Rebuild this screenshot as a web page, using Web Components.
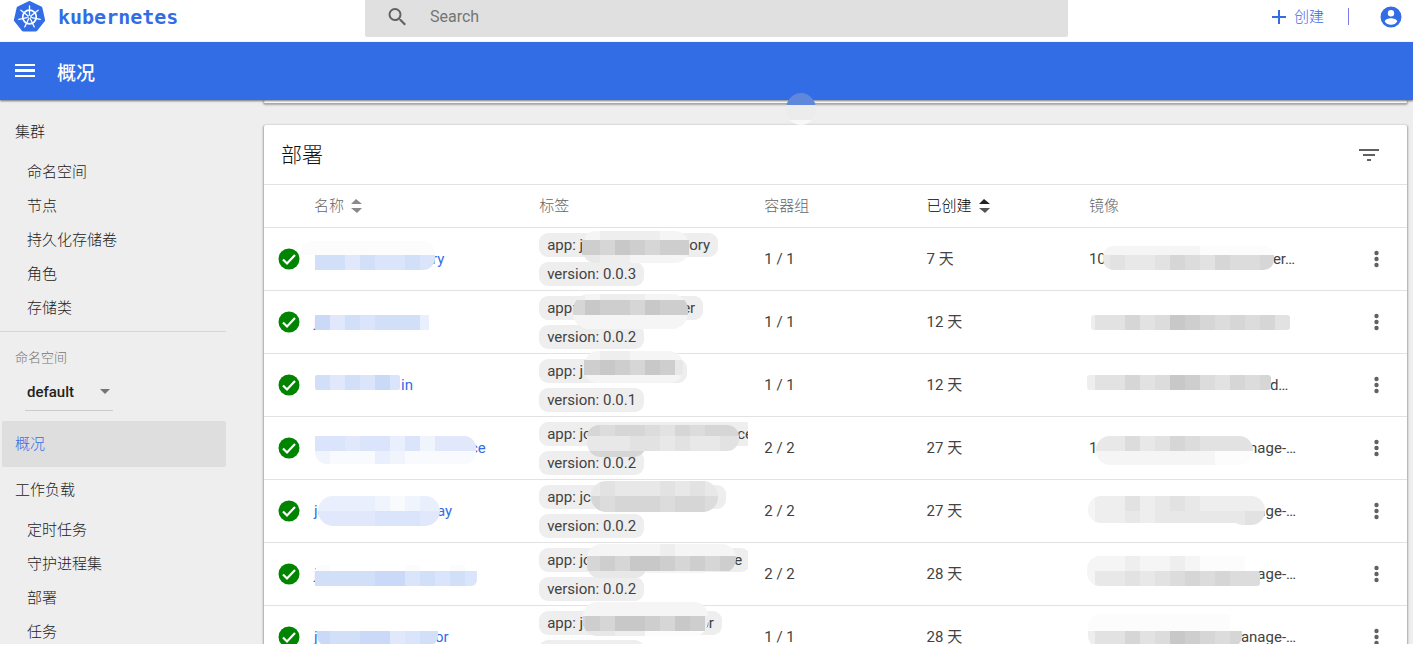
<!DOCTYPE html>
<html lang="zh-CN">
<head>
<meta charset="utf-8">
<title>Kubernetes Dashboard</title>
<style>
  html, body { margin: 0; height: 100%; background: #fff; overflow: hidden; }
  body { font: 15px/20px Roboto, "Noto Sans CJK SC", sans-serif; color: #333; }
</style>
</head>
<body>
<kd-app>
  <kd-topbar slot="top"></kd-topbar>
  <kd-actionbar slot="bar">概况</kd-actionbar>
  <kd-nav slot="nav"></kd-nav>
  <kd-card class="previous"></kd-card>
  <kd-card heading="部署"><kd-deployments></kd-deployments></kd-card>
</kd-app>

<script>
const define = (name, html, setup) => {
  const template = document.createElement('template');
  template.innerHTML = html;
  customElements.define(name, class extends HTMLElement {
    constructor() {
      super();
      this.attachShadow({ mode: 'open' }).append(template.content.cloneNode(true));
    }
    connectedCallback() { if (setup) setup(this, this.shadowRoot); }
  });
};

define('kd-app', `
<style>
  :host { display: flex; flex-direction: column; height: calc(100vh - 9px); overflow: hidden; background: #eee; }
  .body { flex: 1; min-height: 0; display: flex; }
  main { flex: 1; min-width: 0; padding: 0 6px 0 38px; overflow: hidden; display: flex; flex-direction: column; gap: 22px; }
  ::slotted(kd-card) { flex: none; }
  ::slotted(.previous) { height: 3px; }
  .blot { position: absolute; left: calc(50% + 79px); top: 93px; z-index: 3; }
</style>
<slot name="top"></slot>
<slot name="bar"></slot>
<div class="body"><slot name="nav"></slot><main><slot></slot></main></div>
<svg class="blot" width="30" height="32" aria-hidden="true">
  <clipPath id="c"><ellipse cx="15" cy="16" rx="15" ry="16"/></clipPath>
  <g clip-path="url(#c)"><path fill="#5f88dc" d="M0 0h30v12H0z"/><path fill="#ececec" d="M0 12h30v15H0z"/><path fill="#f8f8f8" d="M0 27h30v5H0z"/></g>
</svg>`);

define('kd-topbar', `
<style>
  :host { display: flex; height: 42px; background: #fff; flex: none; align-items: flex-start; }
  .brand { flex: 0 0 365px; box-sizing: border-box; display: flex; padding: 0 0 0 13px; gap: 12px; height: 34px; align-items: center;
    color: #326de6; font: bold 20px/24px "DejaVu Sans Mono", monospace; text-decoration: none; }
  .search { flex: 1; height: 37px; box-sizing: border-box; display: flex; align-items: center; gap: 20px; padding: 0 20px 4px;
    background: #e0e0e0; border-radius: 0 0 2px 2px; }
  input { flex: 1; min-width: 0; border: 0; outline: 0; background: none; padding: 0; font: 16px/20px Roboto, sans-serif; color: #333; }
  input::placeholder { color: #757575; opacity: 1; }
  .actions { flex: 0 0 345px; box-sizing: border-box; display: flex; justify-content: flex-end; align-items: center; height: 33px; padding-right: 10px; }
  button { border: 0; background: none; padding: 0; color: #326de6; font: 300 15px/20px Roboto, "Noto Sans CJK SC", sans-serif; display: flex; align-items: center; gap: 7px; }
  i { width: 1px; height: 17px; background: #7c7be8; margin: 0 30px 0 24px; }
</style>
<a class="brand" href="#"><svg width="33" height="34" viewBox="-16.500 -17 33 34" aria-hidden="true">
  <path d="M0-14 10.900-8.700 13.600 3.100 6.100 12.600H-6.100L-13.600 3.100-10.900-8.700Z" fill="#326de6" stroke="#326de6" stroke-width="4" stroke-linejoin="round"/>
  <g id="w" stroke="#fff" fill="none" stroke-linecap="round"><circle r="6.800" stroke-width="1.700"/><circle r="1.700" stroke-width="1"/></g>
</svg><span>kubernetes</span></a>
<label class="search"><svg width="25" height="24" viewBox="0 0 24 24" fill="#616161" aria-hidden="true"><path d="M15.500 14h-.79l-.28-.27A6.470 6.470 0 0 0 16 9.500 6.500 6.500 0 1 0 9.500 16c1.610 0 3.090-.59 4.230-1.570l.27.28v.79l5 4.990L20.490 19l-4.990-5zm-6 0a4.500 4.500 0 1 1 0-9 4.500 4.500 0 0 1 0 9z"/></svg>
  <input type="text" placeholder="Search" aria-label="Search"></label>
<div class="actions">
  <button><svg width="16" height="16" stroke="#326de6" stroke-width="2" aria-hidden="true"><path d="M8 1v14M1 8h14"/></svg>创建</button>
  <i></i>
  <button aria-label="User"><svg width="24" height="24" viewBox="0 0 24 24" fill="#326de6" aria-hidden="true"><path d="M12 1.500a10.500 10.500 0 1 0 0 21 10.500 10.500 0 0 0 0-21zM12 5a3.200 3.200 0 1 1 0 6.400A3.200 3.200 0 0 1 12 5zm0 14.700a7.300 7.300 0 0 1-6.200-3.300c0-2.100 4.100-3.200 6.200-3.200s6.200 1.100 6.200 3.200a7.300 7.300 0 0 1-6.200 3.300z"/></svg></button>
</div>`, (el, root) => {
  root.getElementById('w').innerHTML += [0, 1, 2, 3, 4, 5, 6].map(k =>
    `<path stroke-width="1.300" transform="rotate(${k * 360 / 7})" d="M0-2.500V-11"/>`).join('');
});

define('kd-actionbar', `
<style>
  :host { display: flex; flex: none; align-items: center; height: 58px; padding-left: 12px; gap: 20px; background: #326de6; color: #fff;
    position: relative; z-index: 2; box-shadow: 0 1px 2px rgba(0,0,0,.55); }
  button { border: 0; padding: 0; background: none; display: flex; }
  h1 { margin: 6px 0 0; font: 500 19px/24px Roboto, "Noto Sans CJK SC", sans-serif; }
</style>
<button aria-label="Menu"><svg width="25" height="24" fill="#fff" aria-hidden="true"><path d="M3 5h20v2H3zM3 10h20v3H3zM3 16h20v2H3z"/></svg></button>
<h1><slot></slot></h1>`);

define('kd-nav', `
<style>
  :host { display: block; flex: 0 0 226px; padding-top: 9px; font-weight: 300; overflow: hidden; }
  a { display: block; color: #222; text-decoration: none; line-height: 34px; padding-left: 27px; }
  a.group { line-height: 46px; padding-left: 15px; }
  a.current { margin-left: 2px; padding-left: 13px; background: #dedede; border-radius: 2px; color: #326de6; }
  hr { border: 0; border-top: 1px solid #d6d6d6; margin: 6px 0 16px; }
  label { display: block; padding-left: 15px; font-size: 13px; line-height: 20px; color: #757575; }
  .picker { position: relative; width: 88px; margin: 6px 0 10px 25px; border-bottom: 1px solid #ccc; }
  select { display: block; appearance: none; border: 0; outline: 0; background: none; width: 100%; height: 36px; padding: 0 0 0 2px; font: 500 15px/20px Roboto, sans-serif; color: #222; }
  .picker svg { position: absolute; right: 3px; top: 15px; pointer-events: none; }
</style>
<nav>
  <a class="group" href="#">集群</a>
  <a href="#">命名空间</a><a href="#">节点</a><a href="#">持久化存储卷</a><a href="#">角色</a><a href="#">存储类</a>
  <hr>
  <label for="ns">命名空间</label>
  <div class="picker"><select id="ns"><option>default</option></select><svg width="10" height="5" fill="#757575"><path d="M0 0h10L5 5z"/></svg></div>
  <a class="group current" href="#">概况</a>
  <a class="group" href="#">工作负载</a>
  <a href="#">定时任务</a><a href="#">守护进程集</a><a href="#">部署</a><a href="#">任务</a>
</nav>`);

define('kd-card', `
<style>
  :host { display: block; background: #fff; border-radius: 2px; box-shadow: 0 1px 2px 1px rgba(0,0,0,.3); }
  header { display: flex; justify-content: space-between; align-items: center; height: 59px; padding: 0 28px 0 17px; }
  header[hidden] { display: none; }
  h2 { margin: 0; font: 300 21px/28px Roboto, "Noto Sans CJK SC", sans-serif; color: #111; }
  button { border: 0; background: none; padding: 0; display: flex; }
</style>
<header><h2></h2><button aria-label="Filter"><svg width="20" height="14" fill="#616161"><path d="M0 1h20v2H0zM4 6h12v2H4zM8 11h4v2H8z"/></svg></button></header>
<slot></slot>`, (el, root) => {
  const heading = el.getAttribute('heading');
  root.querySelector('header').hidden = !heading;
  root.querySelector('h2').textContent = heading || '';
});

define('kd-chip', `
<style>
  :host { display: block; width: max-content; height: 24px; line-height: 24px; padding: 0 8px; border-radius: 9px; background: #eee; white-space: nowrap; font-size: 15px; }
</style><slot></slot>`);

/* Pixelated cover over private names: rounded outlines clip bands of 15px tiles. */
const TONES = { 1: '#cbd9f8', 2: '#d2dff9', 3: '#dae4fa', 4: '#e1e8fb', 5: '#e9effc', 6: '#f0f4fd', 7: '#f8fafe',
  A: '#c8c8c8', B: '#cecece', C: '#d6d6d6', D: '#dcdcdc', E: '#e2e2e2', F: '#e8e8e8', G: '#eee', H: '#f5f5f5', I: '#fcfcfc' };
define('kd-mosaic', `
<style>
  :host { position: absolute; left: 0; top: 0; pointer-events: none; }
  svg { display: block; overflow: visible; }
</style><svg width="1" height="1" aria-hidden="true"></svg>`, (el, root) => {
  const { shapes, bands } = JSON.parse(el.getAttribute('pattern'));
  root.querySelector('svg').innerHTML =
    `<clipPath id="m">${shapes.map(([x, y, w, h, r]) => `<rect x="${x}" y="${y}" width="${w}" height="${h}" rx="${r}"/>`).join('')}</clipPath>
     <g clip-path="url(#m)" shape-rendering="crispEdges">${bands.map(([x, y, h, tones]) =>
       [...tones].map((t, i) => TONES[t] ? `<rect x="${x + i * 15}" y="${y}" width="15" height="${h}" fill="${TONES[t]}"/>` : '').join('')).join('')}</g>`;
});

/* text: [lead text, lead width, trailing text] */
const ROWS = [
  { name: ['', 118, 'ry'], nameMask: [[[1,27,60,15,0],[-14,13,135,29,12]], [[-14,13,14,'IIIIIIIIII'],[1,27,15,'224233232']]],
    app: ['app: j', 142, 'ory'], appMask: [[[43,12,107,15,0],[43,3,107,32,14]], [[31,3,9,'GHGGGGHHH'],[31,12,15,'BBCABCBB'],[31,27,8,'GFGGHHHHH']]],
    version: '0.0.3', pods: '1 / 1', age: '7 天',
    image: ['10', 184, 'er…'], imageMask: [[[14,18,171,24,10]], [[6,18,9,'HHHHHHHIIIII'],[6,27,15,'FEFFECDECDDC']]] },
  { name: ['j', 120, ''], nameMask: [[[1,24,114,15,1]], [[1,24,15,'14232225']]],
    app: ['app:', 135, 'er'], appMask: [[[34,3,115,35,16]], [[31,0,9,'GHGGGHHHH'],[31,9,15,'CABBCABB'],[31,24,15,'HHHHHHHHH']]],
    version: '0.0.2', pods: '1 / 1', age: '12 天',
    image: ['', 120, ''], imageMask: [[[2,24,199,15,3]], [[-9,24,15,'GEECEDABCDCDCE']]] },
  { name: ['', 87, 'in'], nameMask: [[[1,21,85,15,2]], [[1,21,15,'242313']]],
    app: ['app: j', 132, ''], appMask: [[[45,6,91,15,0],[45,-3,99,32,14]], [[31,-3,9,'HHGGHHHH'],[31,6,15,'BBABCABG'],[31,21,8,'HHHHHHHH'],[136,6,15,'F']]],
    version: '0.0.1', pods: '1 / 1', age: '12 天',
    image: ['', 181, 'd…'], imageMask: [[[-2,21,184,15,3]], [[-9,21,15,'GEECEDABDECDC']]] },
  { name: ['', 156, 'ce'], nameMask: [[[1,19,60,15,0],[1,19,161,28,12]], [[1,19,15,'33433536444'],[1,34,13,'67775677777']]],
    app: ['app: jc', 190, 'ce'], appMask: [[[48,8,152,26,12],[48,8,60,32,14]], [[46,8,11,'CDCCDECDCCC'],[46,19,15,'FFFEEFEFFEE'],[46,34,6,'CCCCD']]],
    version: '0.0.2', pods: '2 / 2', age: '27 天',
    image: ['1', 152, 'anage-…'], imageMask: [[[7,19,157,29,14]], [[6,19,15,'FFDFECDEEEE'],[6,34,14,'HHHHHHHHIII']]] },
  { name: ['jc', 123, 'ay'], nameMask: [[[4,16,122,30,15]], [[1,16,15,'555567655'],[1,31,15,'444433344']]],
    app: ['app: jc', 171, ''], appMask: [[[52,1,127,31,15]], [[46,1,15,'FEFFFEFEFF'],[46,16,18,'CDCCCDCCDC']]],
    version: '0.0.2', pods: '2 / 2', age: '27 天',
    image: ['', 152, 'anage-…'], imageMask: [[[-1,16,176,27,13],[140,16,36,29,14]], [[-9,16,15,'HGGEGFEFGGGGG'],[-9,31,14,'HGGFGFFFFFFEE']]] },
  { name: ['j', 155, 'e'], nameMask: [[[1,28,60,15,0],[1,22,162,21,6]], [[1,22,6,'I.....I..I'],[1,28,15,'22221132323']]],
    app: ['app: jc', 187, 'e'], appMask: [[[48,1,149,29,14],[48,10,60,25,12]], [[46,1,12,'HHHHHGHHHHH'],[46,13,15,'CBCAABCBCBB'],[46,28,7,'FFFFHHHH']]],
    version: '0.0.2', pods: '2 / 2', age: '28 天',
    image: ['', 152, 'anage-…'], imageMask: [[[-2,13,172,30,13],[130,28,41,15,3]], [[-9,13,15,'HHHGHHGHIII'],[-9,28,15,'HFFEFEDCDCDDCC']]] },
  { name: ['j', 121, 'or'], nameMask: [[[3,15,121,25,10]], [[1,25,15,'122114322']]],
    app: ['app: jc', 153, 'or'], appMask: [[[44,-4,125,34,14]], [[31,-4,14,'HHHHHHHHHH'],[31,10,15,'CBCAABCABG'],[31,25,7,'GFFGGIIII']]],
    version: '0.0.2', pods: '1 / 1', age: '28 天',
    image: ['', 152, 'anage-…'], imageMask: [[[-1,8,154,34,12]], [[-9,8,17,'IIIIIIIIII'],[-9,25,15,'GEECEDABCDC']]] },
];
const masked = ([lead, width, tail]) => `<span class="lead" style="width:${width}px">${lead}</span>${tail}`;
const mosaic = ([shapes, bands]) => `<kd-mosaic pattern='${JSON.stringify({ shapes, bands })}'></kd-mosaic>`;

define('kd-deployments', `
<style>
  :host { display: block; }
  table { width: 100%; table-layout: fixed; border-collapse: separate; border-spacing: 0; }
  th, td { padding: 0; text-align: left; border-top: 1px solid #e2e2e2; box-sizing: border-box; white-space: nowrap; position: relative; }
  th { height: 43px; font-weight: 300; color: #666; }
  th.sorted { color: #000; }
  th svg { vertical-align: -2px; margin-left: 7px; }
  td { height: 63px; color: #424242; }
  .state { width: 50px; } .more { width: 48px; }
  .name, .labels { width: 19.700%; } .pods, .age { width: 14.200%; }
  td.state svg { display: block; margin-left: 14px; }
  td.more button { border: 0; background: none; padding: 0 15px; display: flex; }
  td.name a { color: #326de6; text-decoration: none; }
  .chips { display: grid; gap: 5px; overflow: hidden; width: calc(100% - 16px); }
  .lead { display: inline-block; }
</style>
<table>
  <thead><tr><th class="state"></th><th class="name">名称<svg width="11" height="14" fill="#8a8a8a"><path d="M0 5h11L5 0zM0 9h11l-5 5z"/></svg></th><th class="labels">标签</th><th class="pods">容器组</th>
  <th class="age sorted">已创建<svg width="11" height="14"><path fill="#222" d="M0 5h11L5 0z"/><path fill="#555" d="M0 9h11l-5 5z"/></svg></th><th>镜像</th><th class="more"></th></tr></thead>
  <tbody></tbody>
</table>`, (el, root) => {
  root.querySelector('tbody').innerHTML = ROWS.map(r => `<tr>
    <td class="state"><svg width="22" height="22" viewBox="0 0 22 22" role="img" aria-label="OK"><circle cx="11" cy="11" r="10.500" fill="#018501"/><path d="M5 11.500l4 4 8-8.500" fill="none" stroke="#fff" stroke-width="2.200"/></svg></td>
    <td class="name"><a href="#">${masked(r.name)}</a>${mosaic(r.nameMask)}</td>
    <td><div class="chips"><kd-chip>${masked(r.app)}</kd-chip><kd-chip>version: ${r.version}</kd-chip></div>${mosaic(r.appMask)}</td>
    <td>${r.pods}</td><td>${r.age}</td>
    <td>${masked(r.image)}${mosaic(r.imageMask)}</td>
    <td class="more"><button aria-label="More"><svg width="5" height="18" fill="#616161"><circle cx="2.500" cy="3" r="2.200"/><circle cx="2.500" cy="9" r="2.200"/><circle cx="2.500" cy="15" r="2.200"/></svg></button></td>
  </tr>`).join('');
});
</script>
</body>
</html>
